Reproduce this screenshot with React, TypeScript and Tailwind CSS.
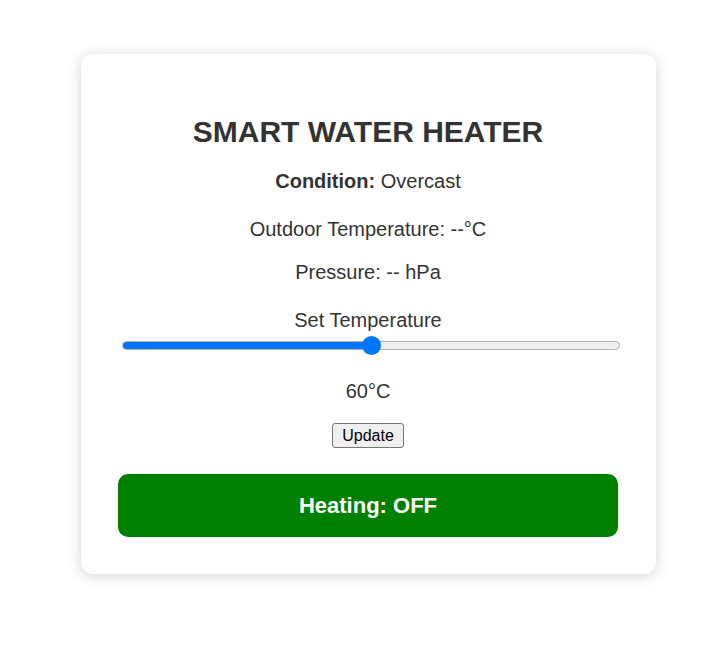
import React from "react";

export default function App() {
  const font = { fontFamily: '"Liberation Sans", Arial, sans-serif' };
  const pct = 0.5;
  return (
    <div className="w-[724px] h-[654px] bg-white" style={font}>
      <div className="pt-[54px] pl-[81px]">
        <div className="w-[575px] h-[520px] bg-white rounded-[12px] shadow-[0_2px_14px_rgba(0,0,0,0.18)] pl-[37px] pr-[38px] pt-[61px] flex flex-col items-center text-[#333]">
          <h1 className="text-[30px] leading-[34px] font-bold text-center whitespace-nowrap">SMART WATER HEATER</h1>
          <p className="mt-[21px] text-[20px] leading-[23px]">
            <span className="font-bold">Condition:</span> Overcast
          </p>
          <p className="mt-[25px] text-[20px] leading-[23px]">Outdoor Temperature: --°C</p>
          <p className="mt-[20px] text-[20px] leading-[23px]">Pressure: -- hPa</p>
          <p className="mt-[25px] text-[20px] leading-[23px]">Set Temperature</p>
          <div className="mt-[4px] self-start ml-[4px] w-[498px] h-[19px] relative flex items-center">
            <div className="w-full h-[9px] rounded-full bg-[#efefef] border border-[#b2b2b2] overflow-hidden">
              <div className="h-full bg-[#0075ff]" style={{ width: `${pct * 100}%` }} />
            </div>
            <div
              className="absolute top-0 w-[19px] h-[19px] rounded-full bg-[#0075ff]"
              style={{ left: `${(498 - 19) * pct}px` }}
            />
          </div>
          <p className="mt-[25px] text-[20px] leading-[23px]">60°C</p>
          <button className="mt-[20px] w-[72px] h-[25px] flex items-center justify-center bg-[#efefef] border border-[#767676] rounded-[3px] text-black text-[16px] leading-[18px]">
            Update
          </button>
          <div className="mt-[26px] w-[500px] h-[63px] rounded-[10px] bg-[#008000] flex items-center justify-center text-white text-[22px] font-bold">
            Heating: OFF
          </div>
        </div>
      </div>
    </div>
  );
}
